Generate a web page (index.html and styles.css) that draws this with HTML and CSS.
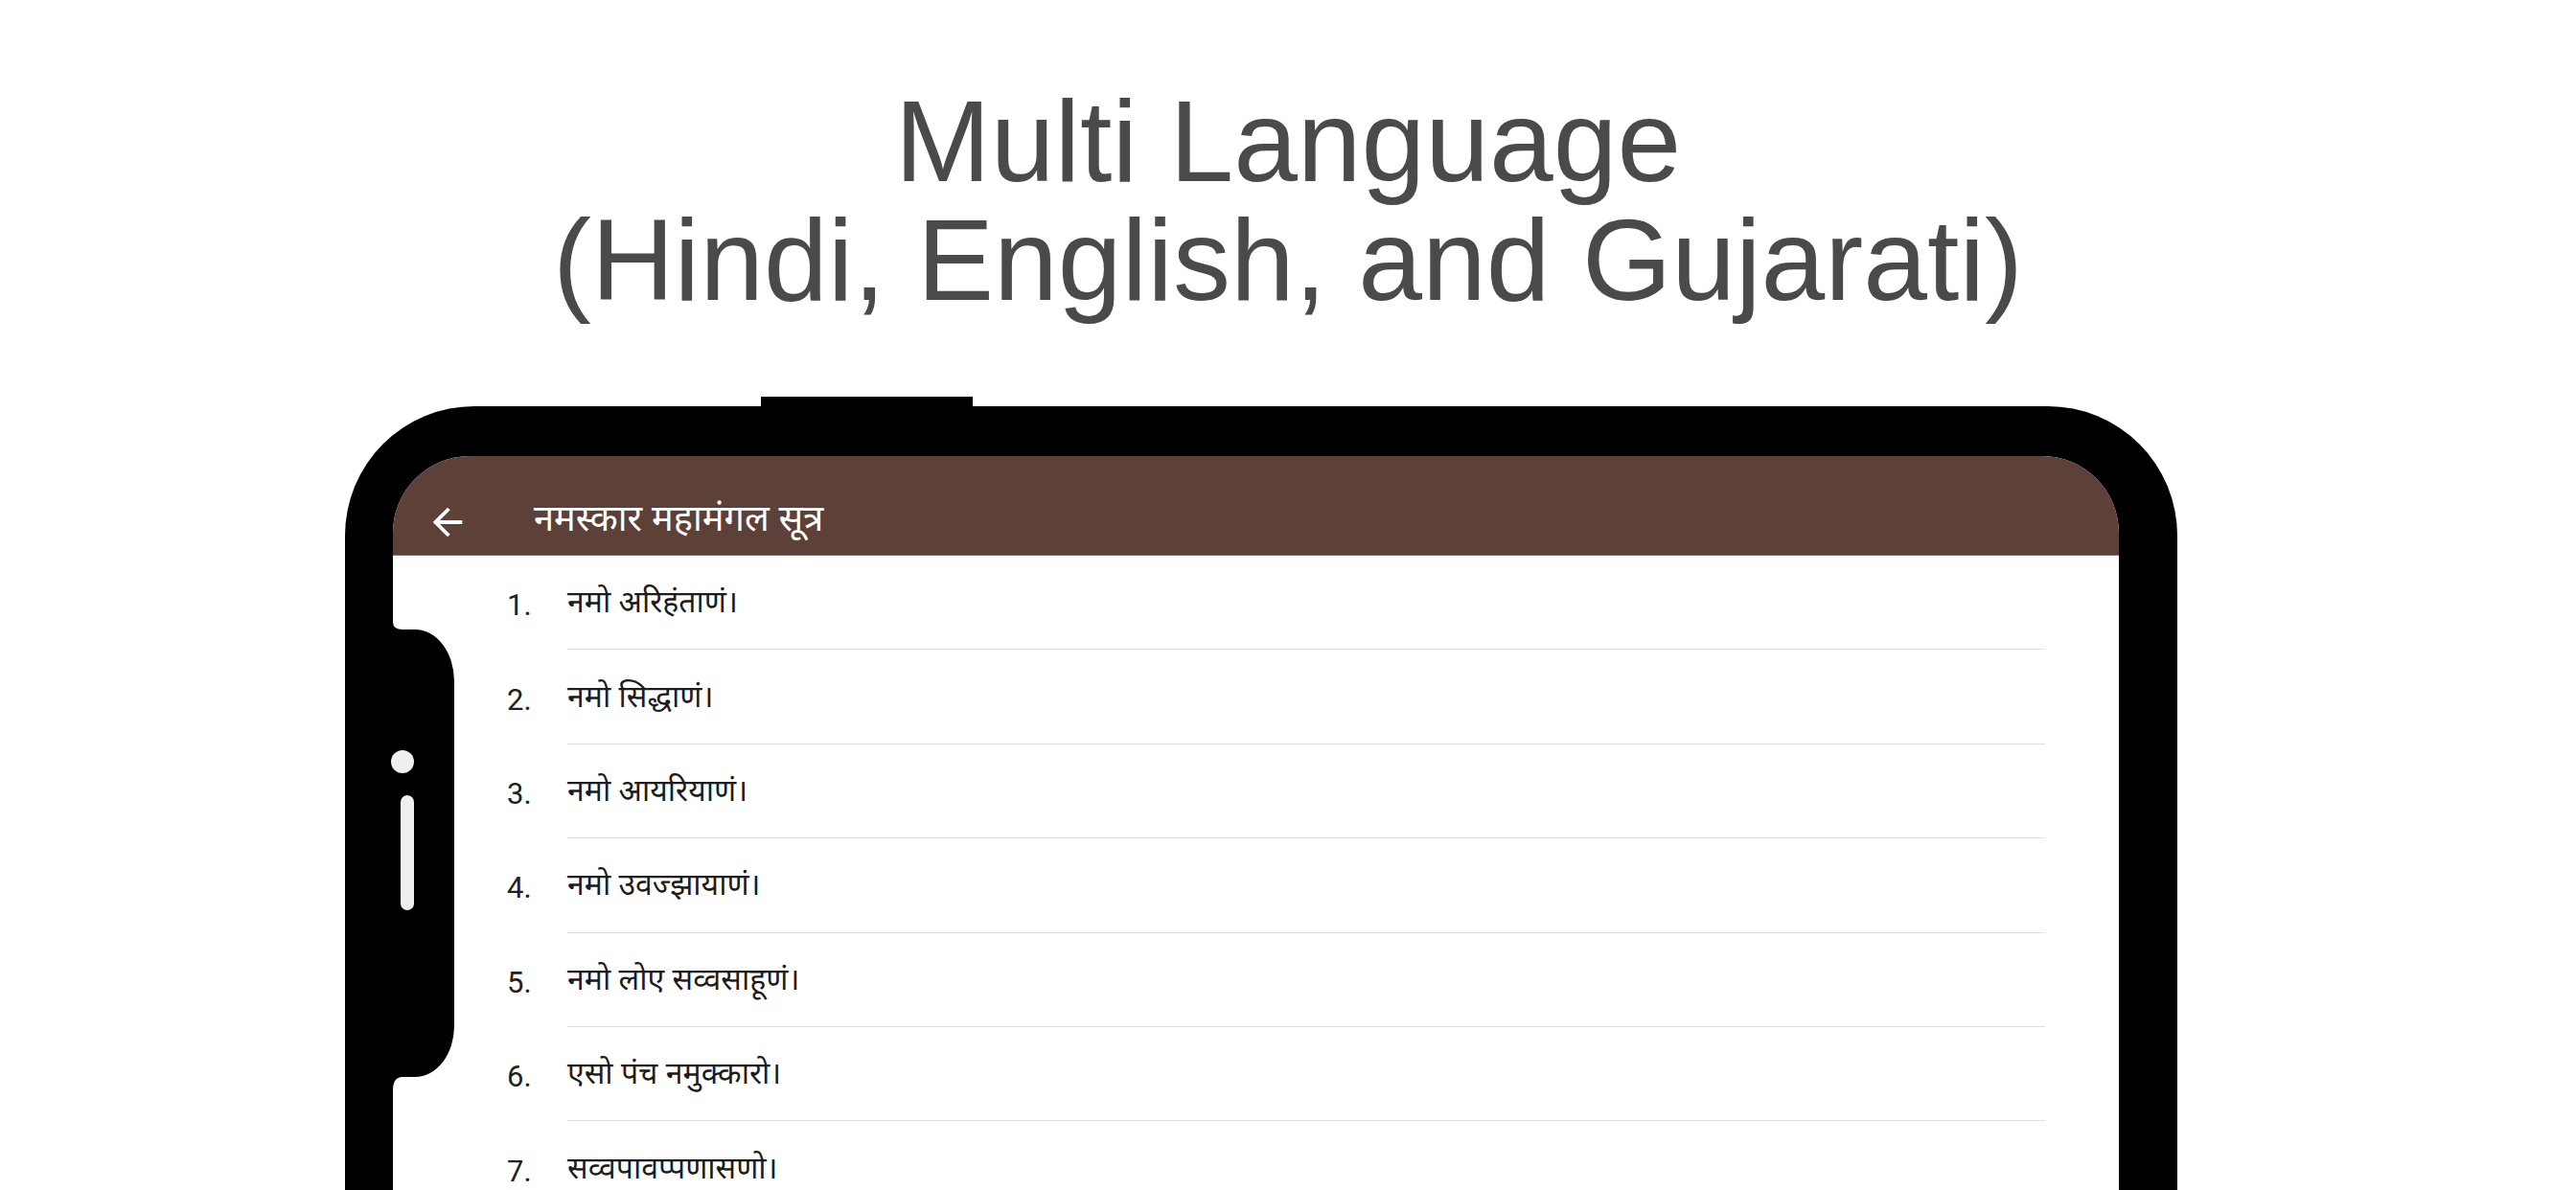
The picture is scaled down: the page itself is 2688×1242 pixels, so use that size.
FILE: index.html
```html
<!DOCTYPE html>
<html lang="en">
<head>
  <meta charset="UTF-8" />
  <meta name="viewport" content="width=device-width, initial-scale=1" />
  <title>Multi Language</title>
  <link rel="stylesheet" href="styles.css">
</head>
<body>

<h1 class="headline">Multi Language<br />(Hindi, English, and Gujarati)</h1>

<div class="phone">
  <div class="phone-notch"></div>

  <!-- side cut-out of the bezel with the camera dot and speaker slot -->
  <svg class="phone-cutout" width="68" height="489" viewBox="0 0 68 489">
    <path d="M0 0 H4 Q4 8 14 8 H27 A41 54 0 0 1 68 62 V422 A41 53 0 0 1 27 475 H14 Q4 475 4 489 H0 Z" fill="#000" />
  </svg>
  <div class="phone-camera"></div>
  <div class="phone-speaker"></div>

  <div class="screen">
    <header class="app-bar">
      <svg class="back-icon" width="46" height="46" viewBox="0 0 24 24">
        <path d="M20 11H7.83l5.59-5.59L12 4l-8 8 8 8 1.41-1.41L7.83 13H20v-2z" fill="#fff" />
      </svg>
      <span class="app-title">नमस्कार महामंगल सूत्र</span>
    </header>

    <ol class="verses">
      <li class="verse"><span class="verse-no">1.</span><span class="verse-text">नमो अरिहंताणं।</span></li>
      <li class="verse"><span class="verse-no">2.</span><span class="verse-text">नमो सिद्धाणं।</span></li>
      <li class="verse"><span class="verse-no">3.</span><span class="verse-text">नमो आयरियाणं।</span></li>
      <li class="verse"><span class="verse-no">4.</span><span class="verse-text">नमो उवज्झायाणं।</span></li>
      <li class="verse"><span class="verse-no">5.</span><span class="verse-text">नमो लोए सव्वसाहूणं।</span></li>
      <li class="verse"><span class="verse-no">6.</span><span class="verse-text">एसो पंच नमुक्कारो।</span></li>
      <li class="verse"><span class="verse-no">7.</span><span class="verse-text">सव्वपावप्पणासणो।</span></li>
      <li class="verse"><span class="verse-no">8.</span><span class="verse-text">मंगलाणं च सव्वेसिं।</span></li>
      <li class="verse"><span class="verse-no">9.</span><span class="verse-text">पढमं हवइ मंगलं।</span></li>
    </ol>
  </div>
</div>

</body>
</html>
```

FILE: styles.css
```css
html, body {
  margin: 0;
  height: 1242px;
  overflow: hidden;
  background: #fff;
}
body {
  font-family: "Liberation Sans", Arial, sans-serif;
}
.headline {
  margin: 85px 0 0;
  text-align: center;
  font-size: 120px;
  line-height: 124px;
  font-weight: normal;
  color: #4a4a4a;
}

/* phone frame */
.phone {
  position: relative;
  box-sizing: border-box;
  width: 1912px;
  height: 1000px;
  margin: 91px 0 0 360px;
  padding: 52px 61px 0 50px;
  background: #000;
  border-radius: 135px 135px 100px 100px;
}
.phone-notch {
  position: absolute;
  top: -10px; left: 434px;
  width: 221px; height: 10px;
  background: #000;
}
.phone-cutout {
  position: absolute;
  top: 225px; left: 46px;
  z-index: 2;
}
.phone-camera {
  position: absolute;
  top: 359px; left: 48px;
  width: 24px; height: 24px;
  border-radius: 50%;
  background: #efefef;
  z-index: 3;
}
.phone-speaker {
  position: absolute;
  top: 406px; left: 58px;
  width: 14px; height: 120px;
  border-radius: 7px;
  background: #efefef;
  z-index: 3;
}

.screen {
  height: 100%;
  background: #fff;
  border-radius: 80px 80px 60px 60px;
  overflow: hidden;
}

/* app bar */
.app-bar {
  box-sizing: border-box;
  height: 104px;
  padding-top: 34px;
  display: flex;
  align-items: center;
  background: #5d4037;
  border-bottom: 1px solid #7468a8;
}
.back-icon {
  margin-left: 34px;
  flex: none;
}
.app-title {
  margin-left: 67px;
  color: #fff;
  font-family: "Noto Sans Devanagari", "Lohit Devanagari", "Noto Sans", sans-serif;
  font-size: 38px;
}

/* verse list */
.verses {
  list-style: none;
  margin: 0;
  padding: 0 77px 0 119px;
}
.verse {
  box-sizing: border-box;
  display: flex;
  align-items: center;
  height: 98.4px;
  padding-top: 5px;
}
.verse-no {
  width: 63px;
  flex: none;
  font-family: Roboto, sans-serif;
  font-size: 31px;
  color: #212121;
}
.verse-text {
  flex: 1;
  box-sizing: border-box;
  height: 100%;
  display: flex;
  align-items: center;
  border-bottom: 1px solid #dedede;
  font-family: "Noto Sans Devanagari", "Lohit Devanagari", "Noto Sans", sans-serif;
  font-size: 32px;
  color: #1c1c1c;
}
```
